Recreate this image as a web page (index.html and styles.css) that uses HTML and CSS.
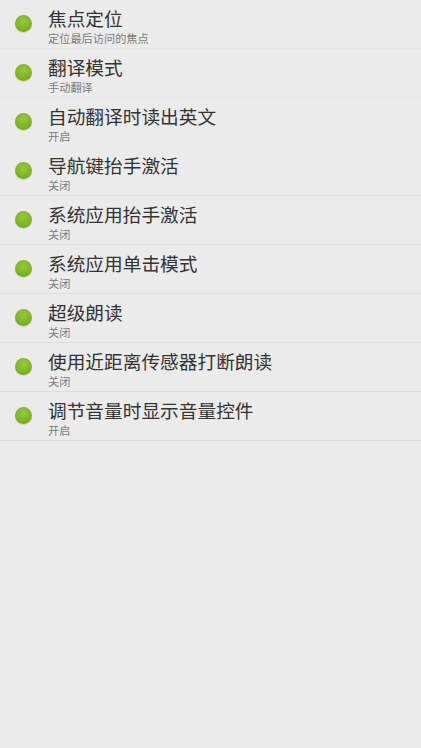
FILE: index.html
```html
<!DOCTYPE html>
<html lang="zh-CN">
<head>
    <meta charset="UTF-8">
    <meta name="viewport" content="width=device-width, initial-scale=1.0">
    <title>设置</title>
    <link rel="stylesheet" href="styles.css">
</head>
<body>
    <ul class="settings">
        <li class="item">
            <span class="dot"></span>
            <div class="text">
                <div class="title">焦点定位</div>
                <div class="summary">定位最后访问的焦点</div>
            </div>
        </li>
        <li class="item">
            <span class="dot"></span>
            <div class="text">
                <div class="title">翻译模式</div>
                <div class="summary">手动翻译</div>
            </div>
        </li>
        <li class="item">
            <span class="dot"></span>
            <div class="text">
                <div class="title">自动翻译时读出英文</div>
                <div class="summary">开启</div>
            </div>
        </li>
        <li class="item">
            <span class="dot"></span>
            <div class="text">
                <div class="title">导航键抬手激活</div>
                <div class="summary">关闭</div>
            </div>
        </li>
        <li class="item">
            <span class="dot"></span>
            <div class="text">
                <div class="title">系统应用抬手激活</div>
                <div class="summary">关闭</div>
            </div>
        </li>
        <li class="item">
            <span class="dot"></span>
            <div class="text">
                <div class="title">系统应用单击模式</div>
                <div class="summary">关闭</div>
            </div>
        </li>
        <li class="item">
            <span class="dot"></span>
            <div class="text">
                <div class="title">超级朗读</div>
                <div class="summary">关闭</div>
            </div>
        </li>
        <li class="item">
            <span class="dot"></span>
            <div class="text">
                <div class="title">使用近距离传感器打断朗读</div>
                <div class="summary">关闭</div>
            </div>
        </li>
        <li class="item">
            <span class="dot"></span>
            <div class="text">
                <div class="title">调节音量时显示音量控件</div>
                <div class="summary">开启</div>
            </div>
        </li>
    </ul>
</body>
</html>
```

FILE: styles.css
```css
body {
    margin: 0;
    background-color: #ebebeb;
    font-family: "Noto Sans CJK SC", "Noto Sans", sans-serif;
    height: 100vh;
}
.settings {
    list-style: none;
    margin: 0;
    padding: 0;
}
.item {
    display: flex;
    align-items: flex-start;
    height: 48px;
    border-bottom: 1px solid #dedede;
}
.item:nth-child(-n+3) {
    border-bottom-color: #e6e6e6;
}
.dot {
    flex: none;
    width: 17px;
    height: 17px;
    margin: 15px 16px 0 15px;
    border-radius: 50%;
    background: radial-gradient(circle at 50% 35%, #96c83c 0%, #80b526 55%, #64941a 100%);
    box-shadow: 0 1px 1px rgba(0, 0, 0, 0.12);
}
.text {
    padding-top: 7px;
}
.title {
    font-size: 18.7px;
    line-height: 22px;
    color: #333333;
}
.summary {
    margin-top: 2px;
    font-size: 11.2px;
    line-height: 14px;
    color: #7a7a7a;
}
```
